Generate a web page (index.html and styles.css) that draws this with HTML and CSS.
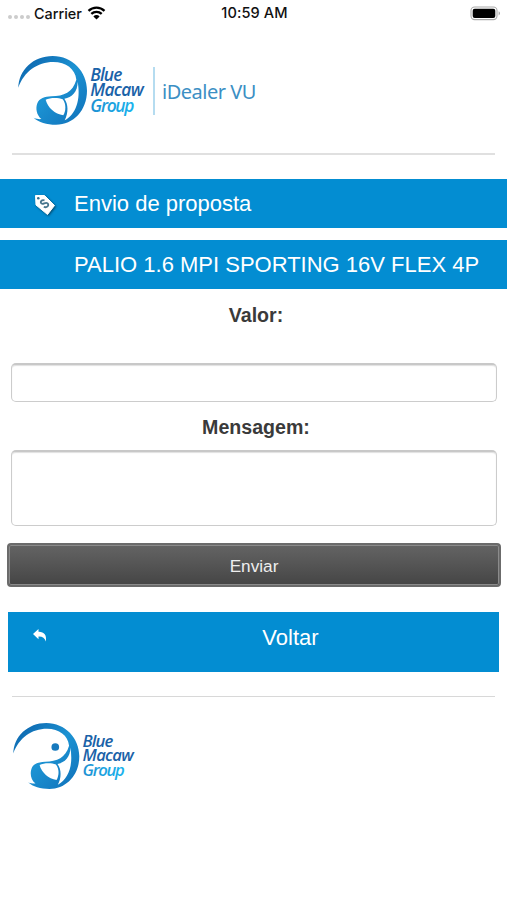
FILE: index.html
```html
<!DOCTYPE html>
<html lang="pt-br">
<head>
    <meta charset="UTF-8">
    <meta name="viewport" content="width=device-width, initial-scale=1.0">
    <title>iDealer VU</title>
    <link rel="stylesheet" href="styles.css">
</head>
<body>
    <div class="status-bar">
        <div class="carrier">
            <span class="dots"><i></i><i></i><i></i><i></i></span>
            <span class="network">Carrier</span>
            <svg class="wifi" viewBox="0 0 18 14">
                <path d="M1 4.9a11.6 11.6 0 0 1 16 0M3.8 7.9a7.5 7.5 0 0 1 10.4 0" fill="none" stroke="#000" stroke-width="2.3"/>
                <path d="M9 13.6L5.9 10.4a4.4 4.4 0 0 1 6.2 0z"/>
            </svg>
        </div>
        <span class="clock">10:59 AM</span>
        <svg class="battery" viewBox="0 0 31 15">
            <rect x="1" y="1" width="26" height="12.6" rx="3.6" fill="#fff" stroke="#aaa" stroke-width="1.1"/>
            <rect x="2.7" y="2.7" width="22.6" height="9.2" rx="2"/>
            <path d="M28.6 5.2v4.2q1.4-.7 1.4-2.1t-1.4-2.1z" fill="#aaa"/>
        </svg>
    </div>

    <header class="header">
        <svg class="logo" viewBox="24 30 384 212">
            <defs>
                <linearGradient id="ring" x1="0" y1="0" x2="1" y2="1">
                    <stop offset="0" stop-color="#0b5fa8"/>
                    <stop offset=".5" stop-color="#1c93d3"/>
                    <stop offset="1" stop-color="#0f6fb8"/>
                </linearGradient>
                <linearGradient id="group" x1="0" y1="0" x2="1" y2="0">
                    <stop offset="0" stop-color="#1e90d2"/>
                    <stop offset="1" stop-color="#19b4ee"/>
                </linearGradient>
            </defs>
            <g id="macaw">
                <path fill="url(#ring)" d="M25 128C26 75 70 33 128 33C187 33 231 80 231 137C231 196 190 239 138 239C110 239 86 232 71 218C80 222 88 223 94 222C80 211 76 190 82 175C88 160 104 155 124 154C162 153 188 142 199 104C196 72 168 51 130 51C82 51 42 80 25 128Z"/>
                <path fill="#fff" d="M203 110C203 140 186 157 163 161C175 177 176 203 164 226C197 208 213 166 203 110Z"/>
                <path fill="#fff" d="M107 164C120 158 144 157 158 163C169 177 168 198 160 211C134 206 114 189 107 164Z"/>
            </g>
            <g id="brand" class="brand">
                <text x="241" y="107" textLength="96">Blue</text>
                <text x="241" y="153" textLength="160">Macaw</text>
                <text x="241" y="200" textLength="132" class="brand-group">Group</text>
            </g>
        </svg>
        <span class="product">iDealer VU</span>
    </header>

    <h1 class="bar">
        <svg class="tag" viewBox="0 0 22 22">
            <path d="M1.5 1.5L10.5 1.5L20.5 11.5L13.5 20.5L2 11z" fill="#fff" stroke="#fff" stroke-linejoin="round"/>
            <circle cx="4.3" cy="4.3" r="1.3" fill="#36718f"/>
            <path d="M10.5 6.3C7.5 5.4 5.6 8.3 7.6 9.6C9.5 10.8 11.4 7.6 13.6 9.4C15.6 11.4 12.8 14.3 9.8 12.8" fill="none" stroke="#46758d" stroke-width="1.8"/>
        </svg>
        Envio de proposta
    </h1>
    <h2 class="bar">PALIO 1.6 MPI SPORTING 16V FLEX 4P</h2>

    <form class="proposal">
        <label for="valor">Valor:</label>
        <input type="text" id="valor" name="valor" class="field field-value">
        <label for="mensagem">Mensagem:</label>
        <textarea id="mensagem" name="mensagem" class="field field-message"></textarea>
        <button type="button" class="send">Enviar</button>
    </form>

    <a href="#" class="back">
        <svg class="arrow" viewBox="0 0 16 16">
            <path d="M1 6L6.5 1V3.8C12 3.6 15 7 13.8 13.5C12.7 9.8 10.4 8.2 6.5 8.4V11.3z" fill="#fff"/>
        </svg>
        <span>Voltar</span>
    </a>

    <footer class="footer">
        <svg class="logo" viewBox="24 30 384 212">
            <use href="#macaw"/>
            <circle cx="156" cy="108" r="12" fill="#1679bd"/>
            <use href="#brand"/>
        </svg>
    </footer>
</body>
</html>
```

FILE: styles.css
```css
* {
    box-sizing: border-box;
}
body {
    margin: 0;
    min-height: 900px;
    background: #fff;
    color: #3a3a3a;
    font-family: "Liberation Sans", Arial, sans-serif;
}
.status-bar {
    display: grid;
    grid-template-columns: 1fr auto 1fr;
    align-items: center;
    height: 26px;
    padding: 0 6px 0 8px;
    color: #111;
    font-family: Inter, sans-serif;
    font-size: 14px;
    font-weight: 500;
}
.carrier {
    display: flex;
    align-items: center;
    gap: 5px;
}
.dots {
    display: flex;
    gap: 2px;
    padding-top: 8px;
    margin-right: -1px;
}
.dots i {
    width: 4px;
    height: 4px;
    border-radius: 50%;
    background: #ccc;
}
.network {
    font-size: 14.4px;
}
.clock {
    font-size: 14.6px;
    letter-spacing: 0.1px;
}
.wifi {
    width: 19px;
    height: 14px;
}
.battery {
    width: 31px;
    height: 15px;
    justify-self: end;
}
.header {
    display: flex;
    align-items: flex-start;
    height: 129px;
    margin: 0 12px;
    padding: 29px 0 0 6px;
    border-bottom: 2px solid #e0e0e0;
}
.logo {
    display: block;
    width: 128px;
    height: 70.7px;
}
.brand {
    fill: #1a62a8;
    font-family: "Open Sans", sans-serif;
    font-size: 52px;
    font-style: italic;
    font-weight: 600;
}
.brand-group {
    fill: url(#group);
}
.product {
    height: 48px;
    margin: 12px 0 0 7px;
    padding-left: 7px;
    border-left: 2px solid #b5dcf0;
    color: #3c8fc4;
    font-family: "Noto Sans", sans-serif;
    font-size: 20px;
    line-height: 49px;
    letter-spacing: -0.5px;
}
.bar {
    display: flex;
    align-items: center;
    height: 49px;
    margin: 24px 0 0;
    padding-left: 74px;
    background: #038dd2;
    color: #fff;
    font-size: 22px;
    font-weight: normal;
    white-space: nowrap;
}
.bar + .bar {
    margin-top: 12px;
}
.tag {
    width: 22px;
    height: 22px;
    margin: 2px 18px 0 -40px;
    filter: drop-shadow(1px 1px 1px rgba(0, 0, 0, 0.5));
}
.proposal {
    display: flex;
    flex-direction: column;
    padding: 14px 6px 0 7px;
}
.proposal label {
    padding-left: 4px;
    font-size: 19.6px;
    font-weight: bold;
    line-height: 24px;
    text-align: center;
}
.field {
    margin: 0 4px;
    border: 1px solid #ccc;
    border-top: 2px solid #c8c8c8;
    border-radius: 5px;
    background: #fff;
    box-shadow: inset 0 1px 1px #e0e0e0;
    resize: none;
}
.field-value {
    height: 39px;
    margin-top: 36px;
    margin-bottom: 13px;
}
.field-message {
    height: 76px;
    margin-top: 11px;
}
.send {
    height: 44px;
    margin-top: 17px;
    padding: 2px 6px 0;
    border: 2px solid #6b6b6b;
    border-radius: 4px;
    background: linear-gradient(#646464, #454545);
    box-shadow: inset 0 0 0 1px #8b8b8b;
    color: #eee;
    font-family: inherit;
    font-size: 17.2px;
}
.back {
    display: flex;
    align-items: flex-start;
    height: 60px;
    margin: 25px 8px 0;
    padding: 12px 0 0 24px;
    background: #038dd2;
    color: #fff;
    font-size: 22px;
    line-height: 27px;
    text-decoration: none;
}
.back span {
    flex: 1;
    padding-left: 34px;
    text-align: center;
}
.arrow {
    width: 16px;
    height: 16px;
    margin-top: 4px;
}
.footer {
    margin: 24px 12px 0;
    padding: 25px 0 0 1px;
    border-top: 1px solid #d8d8d8;
}
.footer .logo {
    width: 123px;
    height: 67.9px;
}
```
